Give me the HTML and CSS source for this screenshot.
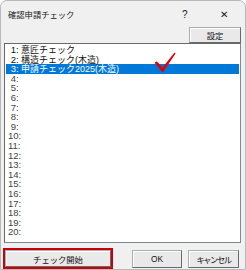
FILE: index.html
```html
<!DOCTYPE html>
<html lang="ja">
<head>
    <meta charset="UTF-8">
    <title>確認申請チェック</title>
    <link rel="stylesheet" href="styles.css">
</head>
<body>
    <div class="window">
        <div class="titlebar">
            <span class="title">確認申請チェック</span>
            <span class="help">?</span>
            <span class="close">✕</span>
        </div>
        <div class="toolbar">
            <button class="btn settings">設定</button>
        </div>
        <div class="list-wrap">
            <ul class="list" id="check-list"></ul>
            <svg class="mark" width="22" height="22" viewBox="0 0 22 22">
                <path d="M0.5 10.5 L3 9.5 L8.5 15.5 L20.5 0.5 L21.5 1.5 L9.5 19.5 L8 20 Z" fill="#e0000a"/>
            </svg>
        </div>
        <div class="footer">
            <div class="highlight">
                <button class="btn start">チェック開始</button>
            </div>
            <button class="btn ok">OK</button>
            <button class="btn cancel">キャンセル</button>
        </div>
    </div>

    <script>
        // list items
        const names = ['意匠チェック', '構造チェック(木造)', '申請チェック2025(木造)'];
        const list = document.getElementById('check-list');

        for (let i = 1; i <= 20; i++) {
            const li = document.createElement('li');
            const num = document.createElement('span');
            num.className = 'num';
            num.textContent = (i < 10 ? ' ' + i : String(i)) + ':';
            li.appendChild(num);
            if (names[i - 1]) {
                li.appendChild(document.createTextNode(' ' + names[i - 1]));
            } else {
                li.classList.add('empty');
            }
            if (i === 3) li.classList.add('selected');
            list.appendChild(li);
        }
    </script>
</body>
</html>
```

FILE: styles.css
```css
body {
    margin: 0;
    padding: 0;
    background: #fff;
    font-family: "Liberation Sans", "Noto Sans CJK JP", sans-serif;
    font-size: 8px;
    color: #111;
}

.window {
    width: 244px;
    height: 268px;
    border: 1px solid #b9b9b9;
    border-radius: 7px 7px 0 0;
    background: #f0f0f0;
    overflow: hidden;
    display: flex;
    flex-direction: column;
}

.titlebar {
    height: 27px;
    display: flex;
    align-items: center;
    padding-left: 7px;
    font-size: 8.3px;
    color: #1a1a1a;
}

.title {
    flex: 1;
}

.help {
    width: 38px;
    font-size: 10px;
}

.close {
    width: 25px;
    font-size: 10px;
}

.toolbar {
    display: flex;
    justify-content: flex-end;
    padding-right: 4px;
}

.btn {
    font-family: "Liberation Sans", "Noto Sans CJK JP", sans-serif;
    font-size: 8.3px;
    color: #111;
    background: #e9e9e9;
    border: 1px solid #adadad;
    border-right-color: #6a6a6a;
    border-bottom-color: #6a6a6a;
    box-shadow: inset 1px 1px 0 #fff;
    padding: 0;
    margin: 0;
}

.settings {
    width: 52px;
    height: 16px;
}

.list-wrap {
    position: relative;
    margin: 0 4px 0 3px;
}

.list {
    list-style: none;
    margin: 0;
    padding: 1px;
    height: 196px;
    background: #fff;
    border: 1px solid #828790;
    border-top-color: #696969;
    border-left-color: #696969;
}

.list li {
    height: 9.6px;
    line-height: 9.6px;
    white-space: pre;
    padding-left: 2px;
    font-size: 9px;
    color: #111;
}

.list li .num {
    font-size: 9.5px;
}

.list li.empty {
    color: #444;
}

.list li.selected {
    background: #0078d7;
    color: #fff;
}

.mark {
    position: absolute;
    left: 150px;
    top: 9px;
}

.footer {
    display: flex;
    align-items: center;
    margin-top: 5px;
    padding: 0 5px 0 2px;
}

.highlight {
    border: 2px solid #c8000a;
    width: 106px;
    height: 17px;
    display: flex;
}

.start {
    flex: 1;
}

.ok {
    width: 50px;
    height: 18px;
    margin-left: 19px;
}

.cancel {
    width: 51px;
    height: 18px;
    margin-left: 6px;
    letter-spacing: -1.5px;
}
```
